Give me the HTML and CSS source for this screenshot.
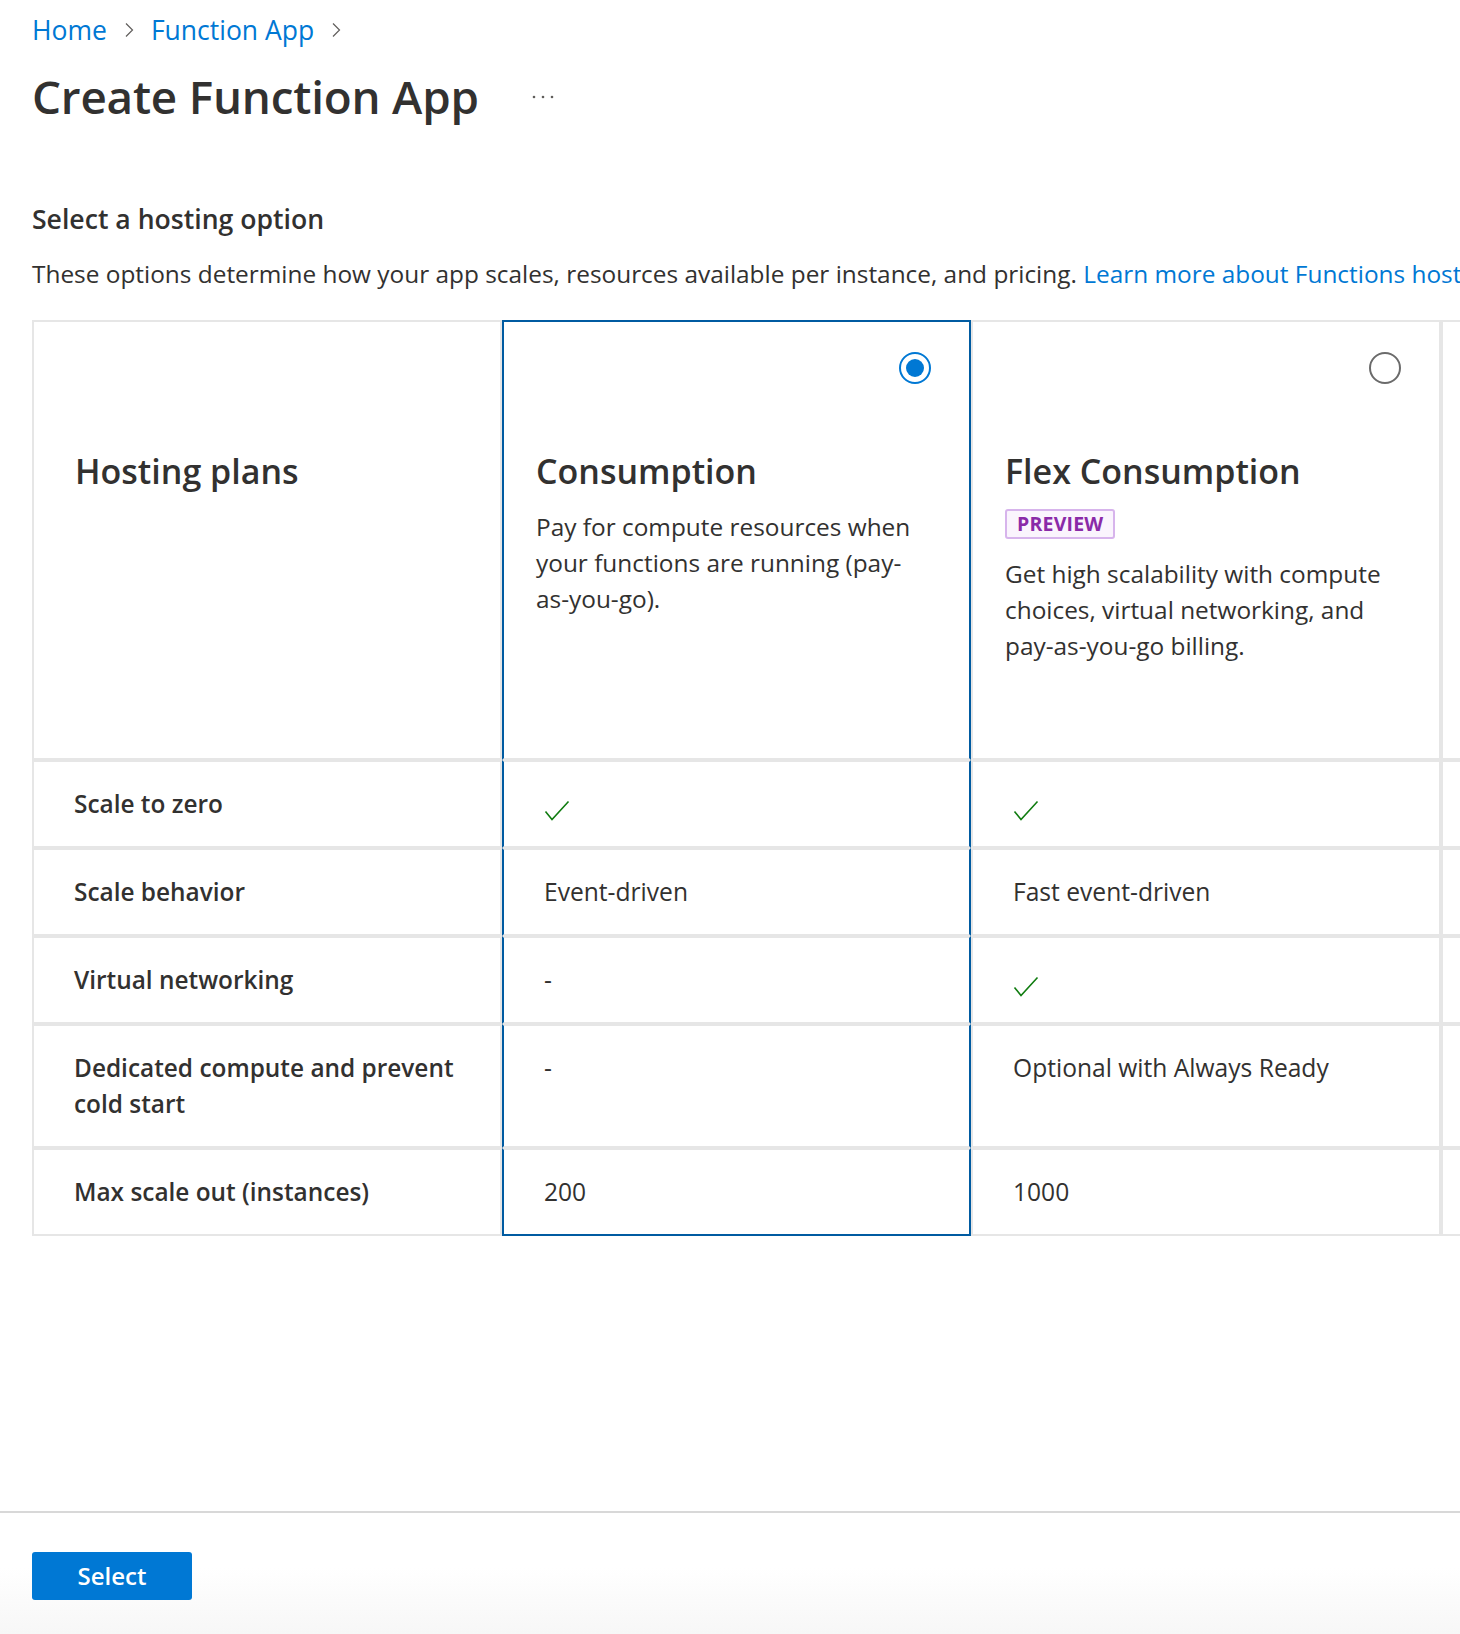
FILE: index.html
```html
<!DOCTYPE html>
<html lang="en">
<head>
<meta charset="utf-8">
<title>Create Function App</title>
<link rel="stylesheet" href="styles.css">
</head>
<body>
<div class="page">
  <div class="main">
    <nav class="crumbs">
      <a class="crumb" href="#">Home</a>
      <svg class="chev" width="10" height="16" viewBox="0 0 10 16"><polyline points="2,1.5 8.5,8 2,14.5" fill="none" stroke="#605e5c" stroke-width="1.2"/></svg>
      <a class="crumb" href="#">Function App</a>
      <svg class="chev" width="10" height="16" viewBox="0 0 10 16"><polyline points="2,1.5 8.5,8 2,14.5" fill="none" stroke="#605e5c" stroke-width="1.2"/></svg>
    </nav>
    <div class="title-row">
      <h1 class="title">Create Function App</h1>
      <svg class="more" width="24" height="6" viewBox="0 0 24 6"><circle cx="3" cy="3" r="1.3" fill="#605e5c"/><circle cx="12" cy="3" r="1.3" fill="#605e5c"/><circle cx="21" cy="3" r="1.3" fill="#605e5c"/></svg>
    </div>

    <h2 class="section-title">Select a hosting option</h2>
    <p class="intro">These options determine how your app scales, resources available per instance, and pricing. <a class="link" href="#">Learn more about Functions hosting options</a></p>

    <div class="plans">
      <!-- header row -->
      <div class="cell head">
        <div class="radio-slot"></div>
        <div class="plans-label">Hosting plans</div>
      </div>
      <div class="cell head sel sel-top">
        <div class="radio-slot"><span class="radio on"></span></div>
        <div class="plan-name">Consumption</div>
        <p class="plan-desc">Pay for compute resources when your functions are running (pay-as-you-go).</p>
      </div>
      <div class="cell head">
        <div class="radio-slot"><span class="radio"></span></div>
        <div class="plan-name">Flex Consumption</div>
        <span class="badge">PREVIEW</span>
        <p class="plan-desc flex-desc">Get high scalability with compute choices, virtual networking, and pay-as-you-go billing.</p>
      </div>
      <div class="cell head"></div>

      <!-- Scale to zero -->
      <div class="cell label">Scale to zero</div>
      <div class="cell val sel"><svg class="check" width="26" height="22" viewBox="0 0 26 22"><polyline points="1.5,11.5 8,19.5 24.5,1.5" fill="none" stroke="#107c10" stroke-width="1.6"/></svg></div>
      <div class="cell val"><svg class="check" width="26" height="22" viewBox="0 0 26 22"><polyline points="1.5,11.5 8,19.5 24.5,1.5" fill="none" stroke="#107c10" stroke-width="1.6"/></svg></div>
      <div class="cell val"></div>

      <!-- Scale behavior -->
      <div class="cell label">Scale behavior</div>
      <div class="cell val sel">Event-driven</div>
      <div class="cell val">Fast event-driven</div>
      <div class="cell val"></div>

      <!-- Virtual networking -->
      <div class="cell label">Virtual networking</div>
      <div class="cell val sel">-</div>
      <div class="cell val"><svg class="check" width="26" height="22" viewBox="0 0 26 22"><polyline points="1.5,11.5 8,19.5 24.5,1.5" fill="none" stroke="#107c10" stroke-width="1.6"/></svg></div>
      <div class="cell val"></div>

      <!-- Dedicated compute -->
      <div class="cell label">Dedicated compute and prevent cold start</div>
      <div class="cell val sel">-</div>
      <div class="cell val">Optional with Always Ready</div>
      <div class="cell val"></div>

      <!-- Max scale out -->
      <div class="cell label last">Max scale out (instances)</div>
      <div class="cell val sel sel-bottom last">200</div>
      <div class="cell val last">1000</div>
      <div class="cell val last"></div>
    </div>
  </div>

  <footer class="footer">
    <button class="btn-primary" type="button">Select</button>
  </footer>
</div>
</body>
</html>
```

FILE: styles.css
```css
* { box-sizing: border-box; }

html, body {
  margin: 0;
  padding: 0;
  background: #ffffff;
  overflow: hidden;
}

body {
  font-family: "Open Sans", "Noto Sans", sans-serif;
  color: #323130;
  font-size: 24.4px;
  line-height: 36px;
}

.page {
  width: 1460px;
  height: 1634px;
  display: flex;
  flex-direction: column;
  overflow: hidden;
}

.main {
  flex: 1;
  padding: 12px 0 0 32px;
  min-width: 0;
}

/* breadcrumb */
.crumbs {
  display: flex;
  align-items: center;
  height: 36px;
  gap: 17px;
}

.crumb {
  color: #0078d4;
  text-decoration: none;
  font-size: 26.5px;
  line-height: 36px;
}

.chev {
  display: block;
}

/* title */
.title-row {
  display: flex;
  align-items: center;
  margin-top: 18px;
  height: 60px;
}

.title {
  margin: 0;
  font-size: 45.8px;
  line-height: 60px;
  font-weight: 600;
  color: #323130;
  letter-spacing: -0.2px;
}

.more {
  display: block;
  margin-left: 52px;
  margin-top: 2px;
}

.section-title {
  margin: 75px 0 0;
  font-size: 26.6px;
  line-height: 36px;
  font-weight: 600;
}

.intro {
  margin: 19px 0 0;
  white-space: nowrap;
  font-size: 24.4px;
  line-height: 36px;
}

.link {
  color: #0078d4;
  text-decoration: none;
}

/* plan grid */
.plans {
  margin-top: 28px;
  display: grid;
  grid-template-columns: 470px 469px 470px 470px;
  width: 1879px;
}

.cell {
  border: 2px solid #e6e6e6;
  padding: 24px 40px;
  min-height: 88px;
}

.cell.head {
  height: 440px;
  padding: 30px 38px 0 32px;
}

.radio-slot {
  height: 32px;
  display: flex;
  justify-content: flex-end;
}

.radio {
  width: 32px;
  height: 32px;
  border-radius: 50%;
  border: 2px solid #6b6b6b;
  display: block;
  position: relative;
}

.radio.on {
  border-color: #0078d4;
}

.radio.on::after {
  content: "";
  position: absolute;
  left: 5px;
  top: 5px;
  width: 18px;
  height: 18px;
  border-radius: 50%;
  background: #0078d4;
}

.plans-label,
.plan-name {
  margin-top: 65px;
  font-size: 34px;
  line-height: 44px;
  font-weight: 600;
  color: #323130;
}

.plans-label {
  padding-left: 9px;
}

.plan-desc {
  margin: 16px 0 0;
  font-size: 24.4px;
  line-height: 36px;
}

.flex-desc {
  margin-top: 16px;
}

.badge {
  display: inline-block;
  margin-top: 16px;
  height: 30px;
  padding: 0 10px;
  border: 2px solid #d7b4ec;
  border-radius: 3px;
  background: #faf4fd;
  color: #8a2aa8;
  font-size: 19.5px;
  line-height: 26px;
  font-weight: 700;
  letter-spacing: 0.2px;
}

.cell.label {
  font-weight: 600;
  display: flex;
  align-items: center;
  font-size: 24.4px;
}

.cell.val {
  font-size: 24.6px;
}

.check {
  display: block;
  margin-top: 14px;
}

.cell.sel {
  border-left-color: #005ba1;
  border-right-color: #005ba1;
}

.cell.sel-top {
  border-top-color: #005ba1;
}

.cell.sel-bottom {
  border-bottom-color: #005ba1;
}

/* footer */
.footer {
  height: 123px;
  border-top: 2px solid #d8d8d8;
  padding: 39px 0 0 32px;
  background: linear-gradient(#ffffff 0%, #ffffff 45%, #f7f7f7 100%);
}

.btn-primary {
  width: 160px;
  height: 48px;
  border: none;
  border-radius: 3px;
  background: #0078d4;
  color: #ffffff;
  font-family: "Open Sans", "Noto Sans", sans-serif;
  font-size: 24px;
  font-weight: 600;
  line-height: 48px;
  padding: 0;
}
```
